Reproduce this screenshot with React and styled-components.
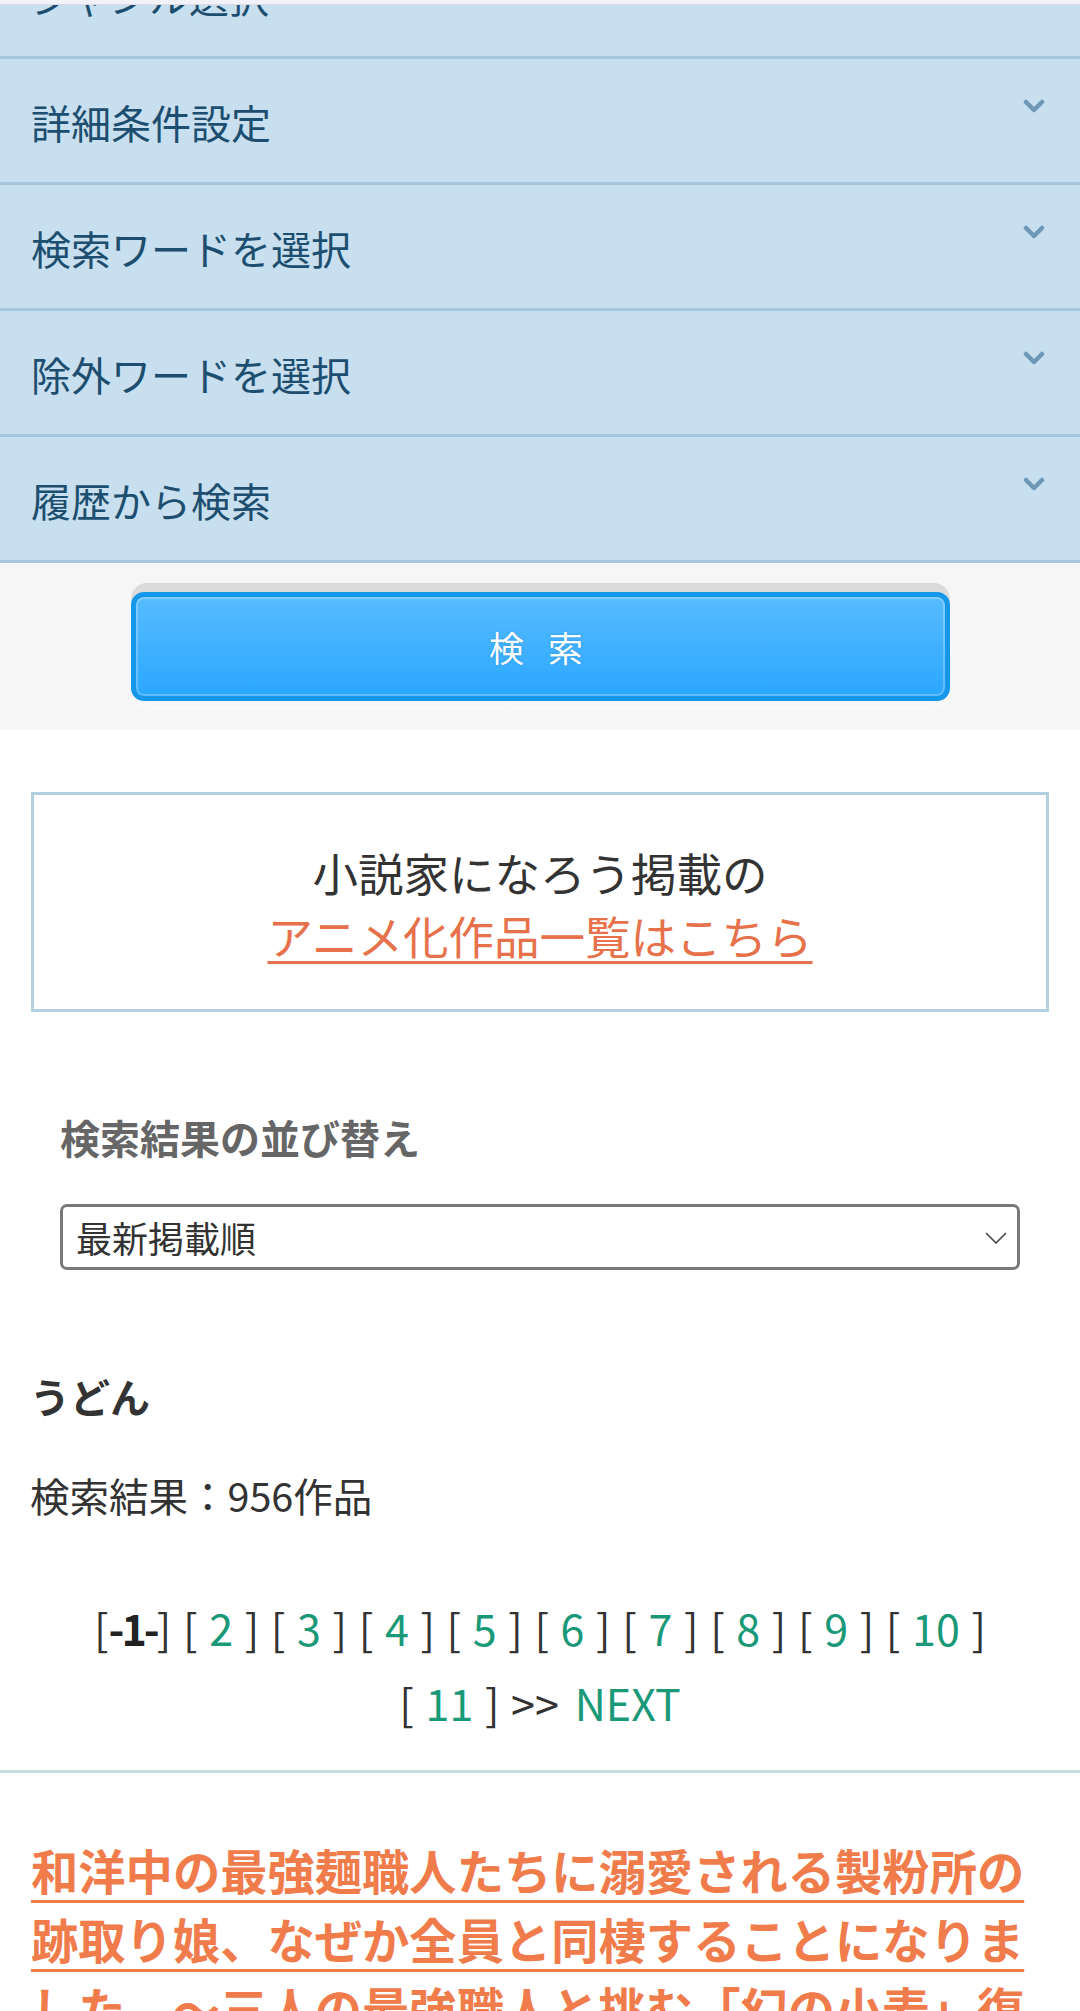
import React from 'react'
import styled, { createGlobalStyle } from 'styled-components'

const GlobalStyle = createGlobalStyle`
  body {
    margin: 0;
    background: #ffffff;
    font-family: "Noto Sans CJK JP", "Noto Sans", sans-serif;
    color: #333333;
  }
  * { box-sizing: border-box; }
`

const Page = styled.div`
  width: 1080px;
  overflow: hidden;
`

const TopStrip = styled.div`
  position: fixed;
  top: 0;
  left: 0;
  right: 0;
  height: 5px;
  background: #f3f2f8;
  border-bottom: 1px solid #dcdce6;
  z-index: 5;
`

const Accordion = styled.div`
  display: flex;
  flex-direction: column;
`

const Row = styled.div`
  display: flex;
  justify-content: space-between;
  height: 126px;
  margin-top: ${p => (p.$first ? '-67px' : '0')};
  padding-left: 31px;
  padding-right: 35px;
  background: #c7dfee;
  border-bottom: 3px solid #a6c7de;
`

const RowLabel = styled.span`
  align-self: center;
  padding-top: 2px;
  font-size: 40px;
  line-height: 1.4;
  color: #1d4e6f;
`

const Chevron = styled.svg`
  margin-top: 40px;
  width: 22px;
  height: 15px;
  flex-shrink: 0;
`

const SearchArea = styled.div`
  background: #f6f6f6;
  padding: 20px 0;
`

const ButtonBase = styled.div`
  width: 819px;
  margin: 0 auto;
  padding: 9px 0;
  border-radius: 16px;
  background: linear-gradient(#d9d9d9, #f9f9f9);
`

const SearchButton = styled.button`
  display: block;
  width: 100%;
  height: 109px;
  border: 5px solid #1597ea;
  border-radius: 13px;
  background: linear-gradient(#57bbff, #2ba7ff);
  box-shadow: inset 0 0 0 2px rgba(255, 255, 255, 0.25);
  color: #ffffff;
  font-family: inherit;
  font-size: 35px;
  letter-spacing: 8px;
  text-shadow: 0 0 2px rgba(0, 90, 160, 0.4);
`

const AnimeBox = styled.div`
  margin: 62px 31px 0;
  padding: 46px 0 42px;
  border: 3px solid #b3d0e0;
  text-align: center;
  font-size: 45.5px;
  line-height: 63px;
  color: #333333;
`

const AnimeLink = styled.a`
  color: #e6714a;
  text-decoration: underline;
  text-decoration-thickness: 3px;
  text-underline-offset: 6px;
`

const SortHeading = styled.h2`
  margin: 96px 0 0 60px;
  font-size: 40px;
  line-height: 59px;
  font-weight: bold;
  color: #666666;
`

const SelectWrap = styled.div`
  position: relative;
  margin: 37px 60px 0;
`

const Select = styled.select`
  display: block;
  width: 100%;
  height: 66px;
  padding: 0 13px;
  appearance: none;
  border: 3px solid #797979;
  border-radius: 7px;
  background: #ffffff;
  font-family: inherit;
  font-size: 36px;
  color: #333333;
`

const SelectArrow = styled.svg`
  position: absolute;
  right: 13px;
  top: 28px;
  width: 22px;
  height: 12px;
  pointer-events: none;
`

const Keyword = styled.h3`
  margin: 96px 0 0 30px;
  font-size: 40px;
  line-height: 60px;
  font-weight: bold;
  color: #333333;
`

const Count = styled.p`
  margin: 39px 0 0 30px;
  font-size: 39.5px;
  line-height: 60px;
  color: #333333;
`

const Pager = styled.div`
  margin: 65px 40px 0;
  text-align: center;
  font-size: 43px;
  line-height: 75px;
  word-spacing: 2px;
  color: #333333;
`

const Current = styled.b`
  font-weight: bold;
  color: #222222;
  letter-spacing: -3px;
`

const PageLink = styled.a`
  color: #1a9978;
  text-decoration: none;
  margin-left: ${p => (p.$gap ? '16px' : '0')};
`

const Divider = styled.hr`
  margin: 30px 0 0;
  border: 0;
  height: 3px;
  background: #c8dfe2;
`

const Title = styled.a`
  display: block;
  margin: 62px 31px 0;
  font-size: 47.3px;
  line-height: 69px;
  font-weight: bold;
  color: #f07b4b;
  text-decoration: underline;
  text-decoration-thickness: 3px;
  text-underline-offset: 10px;
`

const rows = ['ジャンル選択', '詳細条件設定', '検索ワードを選択', '除外ワードを選択', '履歴から検索']

const ChevronIcon = () => (
  <Chevron viewBox="0 0 22 15">
    <path d="M3 3 L11 11 L19 3" fill="none" stroke="#6f98b7" strokeWidth="4.5" strokeLinecap="round" strokeLinejoin="round" />
  </Chevron>
)

export default function App() {
  const pages = [2, 3, 4, 5, 6, 7, 8, 9, 10]
  return (
    <Page>
      <GlobalStyle />
      <TopStrip />
      <Accordion>
        {rows.map((r, i) => (
          <Row key={r} $first={i === 0}>
            <RowLabel>{r}</RowLabel>
            {i > 0 && <ChevronIcon />}
          </Row>
        ))}
      </Accordion>

      <SearchArea>
        <ButtonBase>
          <SearchButton>検 索</SearchButton>
        </ButtonBase>
      </SearchArea>

      <AnimeBox>
        小説家になろう掲載の<br />
        <AnimeLink href="#">アニメ化作品一覧はこちら</AnimeLink>
      </AnimeBox>

      <SortHeading>検索結果の並び替え</SortHeading>
      <SelectWrap>
        <Select defaultValue="new">
          <option value="new">最新掲載順</option>
          <option value="week">週間ユニークユーザ順</option>
        </Select>
        <SelectArrow viewBox="0 0 22 12">
          <path d="M1 1 L11 11 L21 1" fill="none" stroke="#444" strokeWidth="1.6" />
        </SelectArrow>
      </SelectWrap>

      <Keyword>うどん</Keyword>
      <Count>検索結果：956作品</Count>

      <Pager>
        [<Current>-1-</Current>]{' '}
        {pages.map(n => (
          <React.Fragment key={n}>
            [ <PageLink href="#">{n}</PageLink> ]{' '}
          </React.Fragment>
        ))}
        <br />
        [ <PageLink href="#">11</PageLink> ] &gt;&gt;
        <PageLink href="#" $gap>NEXT</PageLink>
      </Pager>

      <Divider />

      <Title href="#">
        和洋中の最強麺職人たちに溺愛される製粉所の跡取り娘、なぜか全員と同棲することになりました　～三人の最強職人と挑む「幻の小麦」復活譚～
      </Title>
    </Page>
  )
}
